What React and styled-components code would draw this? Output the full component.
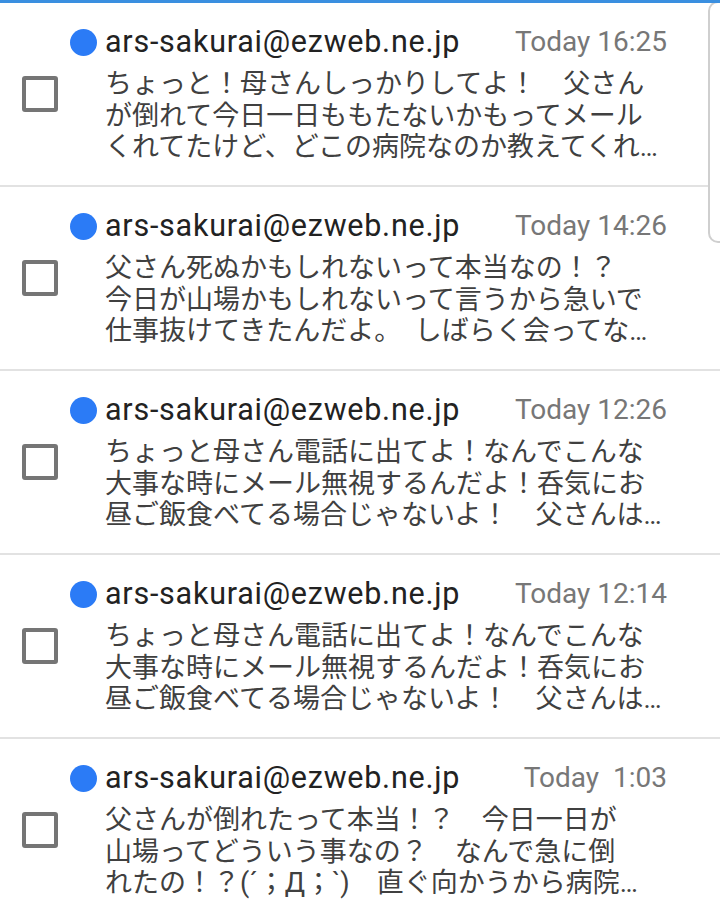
import React from "react";
import styled, { createGlobalStyle } from "styled-components";

const mails = [
    {
        time: "Today 16:25",
        lines: [
            "ちょっと！母さんしっかりしてよ！　父さん",
            "が倒れて今日一日ももたないかもってメール",
            "くれてたけど、どこの病院なのか教えてくれ…",
        ],
    },
    {
        time: "Today 14:26",
        lines: [
            "父さん死ぬかもしれないって本当なの！？",
            "今日が山場かもしれないって言うから急いで",
            "仕事抜けてきたんだよ。　しばらく会ってな…",
        ],
    },
    {
        time: "Today 12:26",
        lines: [
            "ちょっと母さん電話に出てよ！なんでこんな",
            "大事な時にメール無視するんだよ！呑気にお",
            "昼ご飯食べてる場合じゃないよ！　父さんは…",
        ],
    },
    {
        time: "Today 12:14",
        lines: [
            "ちょっと母さん電話に出てよ！なんでこんな",
            "大事な時にメール無視するんだよ！呑気にお",
            "昼ご飯食べてる場合じゃないよ！　父さんは…",
        ],
    },
    {
        time: "Today  1:03",
        lines: [
            "父さんが倒れたって本当！？　今日一日が",
            "山場ってどういう事なの？　なんで急に倒",
            "れたの！？(´；Д；`)　直ぐ向かうから病院…",
        ],
    },
];

const App = () => {
    return (
        <>
            <GlobalStyle />
            <Inbox>
                <ScrollHandle />
                {mails.map((mail, i) => (
                    <MailRow key={i}>
                        <CheckCell>
                            <Checkbox />
                        </CheckCell>
                        <Body>
                            <Header>
                                <UnreadDot />
                                <Sender>ars-sakurai@ezweb.ne.jp</Sender>
                                <Time>{mail.time}</Time>
                            </Header>
                            <Preview>
                                {mail.lines.map((line, j) => (
                                    <PreviewLine key={j}>{line}</PreviewLine>
                                ))}
                            </Preview>
                        </Body>
                    </MailRow>
                ))}
            </Inbox>
        </>
    )
}

const GlobalStyle = createGlobalStyle`
    body{
        margin: 0;
        background: #fff;
        font-family: Roboto, "Noto Sans CJK JP", sans-serif;
    }
`

const Inbox = styled.div`
    position: relative;
    width: 720px;
    height: 913px;
    overflow: hidden;
    background: #fff;
    border-top: 3px solid #3a8fe0;
    box-sizing: border-box;
`

const ScrollHandle = styled.div`
    position: absolute;
    top: -2px;
    right: -12px;
    width: 20px;
    height: 238px;
    border: 2px solid #cfcfcf;
    border-radius: 10px;
    background: #fff;
`

const MailRow = styled.div`
    display: flex;
    height: 182px;
    border-bottom: 2px solid #e2e2e2;
`

const CheckCell = styled.div`
    width: 48px;
    padding-left: 22px;
    display: flex;
    align-items: center;
`

const Checkbox = styled.div`
    width: 36px;
    height: 36px;
    box-sizing: border-box;
    border: 4px solid #757575;
    border-radius: 3px;
`

const Body = styled.div`
    flex: 1;
    display: flex;
    flex-direction: column;
    padding: 21px 53px 0 0;
`

const Header = styled.div`
    display: flex;
    align-items: center;
    height: 36px;
`

const UnreadDot = styled.div`
    width: 27px;
    height: 27px;
    border-radius: 50%;
    background: #2b7bf6;
    margin-right: 8px;
`

const Sender = styled.span`
    font-family: Roboto, sans-serif;
    font-size: 30.5px;
    letter-spacing: 0.75px;
    line-height: 36px;
    color: #222;
`

const Time = styled.span`
    margin-left: auto;
    font-family: Roboto, sans-serif;
    font-size: 28px;
    line-height: 36px;
    color: #777;
    white-space: pre;
`

const Preview = styled.div`
    padding-left: 35px;
    margin-top: 9px;
    font-family: Roboto, "Noto Sans CJK JP", sans-serif;
    font-size: 27px;
    line-height: 31.5px;
    color: #404040;
`

const PreviewLine = styled.div`
    white-space: nowrap;
`

export default App;
